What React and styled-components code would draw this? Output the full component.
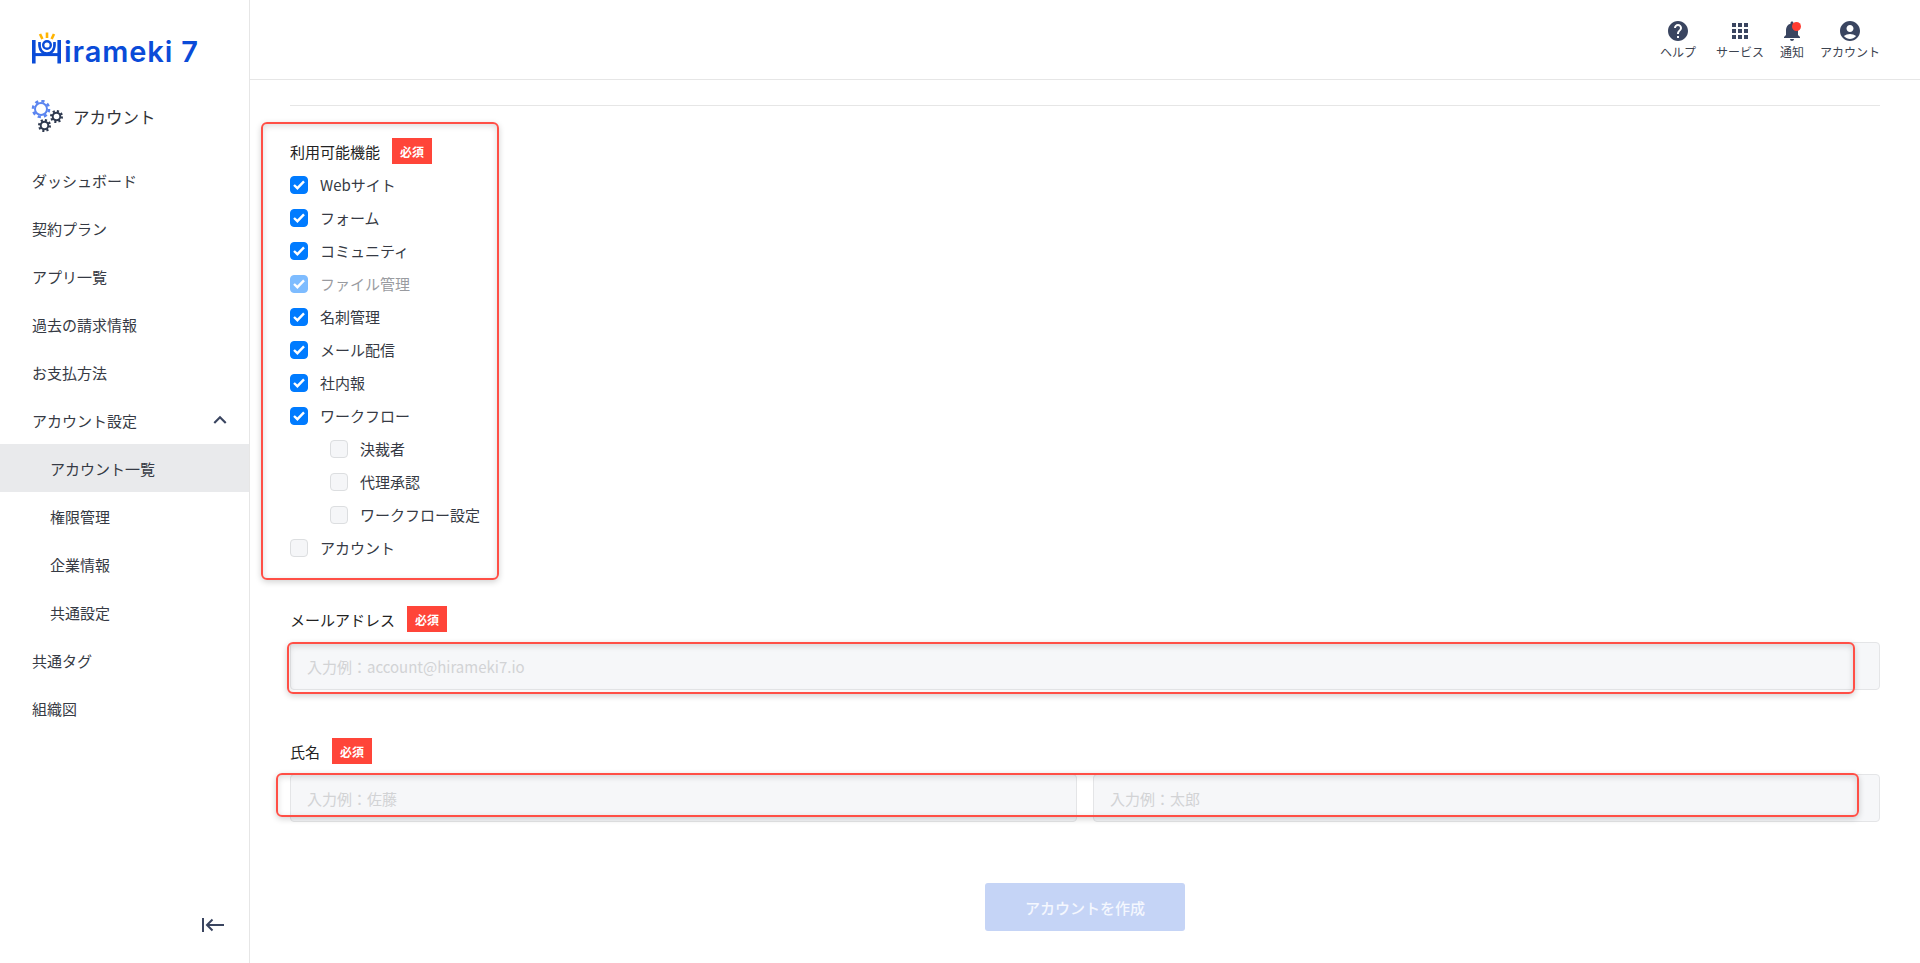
import React from "react";
import styled, { createGlobalStyle } from "styled-components";
import {
  MdHelp,
  MdApps,
  MdNotifications,
  MdAccountCircle,
  MdKeyboardArrowUp,
} from "react-icons/md";

const GlobalStyle = createGlobalStyle`
  * { box-sizing: border-box; }
  html, body { margin: 0; padding: 0; background: #fff; }
  body {
    font-family: "Noto Sans CJK JP", "Noto Sans", sans-serif;
    color: #333;
  }
`;

const menuItems = [
  { label: "ダッシュボード" },
  { label: "契約プラン" },
  { label: "アプリ一覧" },
  { label: "過去の請求情報" },
  { label: "お支払方法" },
  { label: "アカウント設定", open: true },
  { label: "アカウント一覧", sub: true, active: true },
  { label: "権限管理", sub: true },
  { label: "企業情報", sub: true },
  { label: "共通設定", sub: true },
  { label: "共通タグ" },
  { label: "組織図" },
];

const features = [
  { label: "Webサイト", checked: true },
  { label: "フォーム", checked: true },
  { label: "コミュニティ", checked: true },
  { label: "ファイル管理", checked: true, disabled: true },
  { label: "名刺管理", checked: true },
  { label: "メール配信", checked: true },
  { label: "社内報", checked: true },
  { label: "ワークフロー", checked: true },
  { label: "決裁者", sub: true },
  { label: "代理承認", sub: true },
  { label: "ワークフロー設定", sub: true },
  { label: "アカウント" },
];

function LogoMark() {
  return (
    <svg width="30" height="32" viewBox="0 0 30 32">
      <g fill="none" stroke="#ffb400" strokeWidth="2.6">
        <path d="M8 2 L10.4 7" />
        <path d="M15 0.5 V6" />
        <path d="M22 2 L19.6 7" />
      </g>
      <g fill="none" stroke="#0a4bd8">
        <path d="M1.8 8 V31.5" strokeWidth="3.6" />
        <path d="M27.2 8 V31.5" strokeWidth="3.6" />
        <path d="M1.8 22.6 H27.2" strokeWidth="3" />
        <path d="M7.5 10 C6.8 18 10.5 21.5 15 21.5 C19.5 21.5 23.2 18 22.5 10" strokeWidth="2.6" />
        <circle cx="15" cy="13" r="3.8" strokeWidth="2.4" />
      </g>
    </svg>
  );
}

function GearIcon() {
  return (
    <svg width="34" height="34" viewBox="0 0 34 34" fill="none">
      <g stroke="#5b85f0">
        <circle cx="10" cy="9" r="6" strokeWidth="2" />
        <circle cx="10" cy="9" r="8" strokeWidth="2.6" strokeDasharray="3.2 3.1" />
      </g>
      <g stroke="#2f3a4f">
        <circle cx="25.5" cy="16.5" r="3.8" strokeWidth="2" />
        <circle cx="25.5" cy="16.5" r="5.4" strokeWidth="2.2" strokeDasharray="2.1 2.1" />
        <circle cx="13.5" cy="25.5" r="3.8" strokeWidth="2" />
        <circle cx="13.5" cy="25.5" r="5.4" strokeWidth="2.2" strokeDasharray="2.1 2.1" />
      </g>
    </svg>
  );
}

function CollapseIcon() {
  return (
    <svg width="22" height="14" viewBox="0 0 22 14" fill="none" stroke="#3a4560" strokeWidth="2">
      <path d="M1 0 V14" />
      <path d="M22 7 H5" />
      <path d="M10.5 1.5 L5 7 L10.5 12.5" />
    </svg>
  );
}

function CheckMark() {
  return (
    <svg width="12" height="10" viewBox="0 0 12 10" fill="none" stroke="#fff" strokeWidth="2.4">
      <path d="M1 5 L4.4 8.2 L11 1.4" />
    </svg>
  );
}

function FeatureRow({ label, checked, disabled, sub }) {
  return (
    <CheckRow $sub={sub} $disabled={disabled}>
      <CheckBox $checked={checked}>{checked && <CheckMark />}</CheckBox>
      <CheckText>{label}</CheckText>
    </CheckRow>
  );
}

export default function App() {
  return (
    <Page>
      <GlobalStyle />
      <Sidebar>
        <Logo>
          <LogoMark />
          <LogoText>irameki 7</LogoText>
        </Logo>
        <SectionTitle>
          <GearIcon />
          <span>アカウント</span>
        </SectionTitle>
        <Menu>
          {menuItems.map((item) => (
            <MenuItem key={item.label} $sub={item.sub} $active={item.active}>
              {item.label}
              {item.open && <MdKeyboardArrowUp size={26} color="#3a4560" />}
            </MenuItem>
          ))}
        </Menu>
        <CollapseRow>
          <CollapseIcon />
        </CollapseRow>
      </Sidebar>

      <Main>
        <Header>
          <HeaderItem>
            <MdHelp size={24} />
            <HeaderLabel>ヘルプ</HeaderLabel>
          </HeaderItem>
          <HeaderItem>
            <MdApps size={24} />
            <HeaderLabel>サービス</HeaderLabel>
          </HeaderItem>
          <HeaderItem>
            <BellWrap>
              <MdNotifications size={24} />
              <BellDot />
            </BellWrap>
            <HeaderLabel>通知</HeaderLabel>
          </HeaderItem>
          <HeaderItem>
            <MdAccountCircle size={24} />
            <HeaderLabel>アカウント</HeaderLabel>
          </HeaderItem>
        </Header>

        <Content>
          <Divider />

          <FeatureField>
            <Highlight $top={-16} $left={-29} $width={238} $height={458} />
            <FieldLabel>
              利用可能機能<Required>必須</Required>
            </FieldLabel>
            <CheckList>
              {features.map((f) => (
                <FeatureRow key={f.label} {...f} />
              ))}
            </CheckList>
          </FeatureField>

          <InputField>
            <FieldLabel>
              メールアドレス<Required>必須</Required>
            </FieldLabel>
            <InputRow>
              <TextInput disabled placeholder="入力例：account@hirameki7.io" />
              <Highlight $top={0} $left={-3} $width={1568} $height={52} />
            </InputRow>
          </InputField>

          <InputField>
            <FieldLabel>
              氏名<Required>必須</Required>
            </FieldLabel>
            <InputRow>
              <TextInput disabled placeholder="入力例：佐藤" />
              <TextInput disabled placeholder="入力例：太郎" />
              <Highlight $top={-1} $left={-14} $width={1583} $height={44} />
            </InputRow>
          </InputField>

          <ButtonRow>
            <SubmitButton disabled>アカウントを作成</SubmitButton>
          </ButtonRow>
        </Content>
      </Main>
    </Page>
  );
}

const Page = styled.div`
  display: flex;
  width: 100%;
  height: 963px;
  overflow: hidden;
`;

const Sidebar = styled.aside`
  display: flex;
  flex-direction: column;
  flex: 0 0 250px;
  height: 100%;
  border-right: 1px solid #e6e6e6;
`;

const Logo = styled.div`
  display: flex;
  align-items: flex-end;
  height: 64px;
  margin-bottom: 14px;
  padding: 32px 0 0 32px;
`;

const LogoText = styled.span`
  font-family: "Inter", sans-serif;
  font-weight: 600;
  font-size: 29px;
  line-height: 30px;
  letter-spacing: 0.9px;
  color: #0a4bd8;
  margin-left: 2px;
  margin-bottom: -3px;
  white-space: nowrap;
`;

const SectionTitle = styled.div`
  display: flex;
  align-items: center;
  gap: 8px;
  height: 78px;
  padding-left: 31px;
  font-size: 16.5px;
  color: #2f3136;
`;

const Menu = styled.nav`
  display: flex;
  flex-direction: column;
`;

const MenuItem = styled.div`
  display: flex;
  align-items: center;
  justify-content: space-between;
  height: 48px;
  padding: 0 16px 0 ${(p) => (p.$sub ? "50px" : "32px")};
  font-size: 15px;
  color: #363a44;
  background: ${(p) => (p.$active ? "#e9eaec" : "transparent")};
`;

const CollapseRow = styled.div`
  display: flex;
  justify-content: flex-end;
  margin-top: auto;
  padding: 0 25px 31px 0;
`;

const Main = styled.main`
  display: flex;
  flex-direction: column;
  flex: 1;
  min-width: 0;
`;

const Header = styled.header`
  display: flex;
  justify-content: flex-end;
  gap: 16px;
  height: 80px;
  padding: 19px 40px 0 0;
  border-bottom: 1px solid #e6e6e6;
`;

const HeaderItem = styled.div`
  display: flex;
  flex-direction: column;
  align-items: center;
  color: #3a4560;

  &:first-child {
    margin-right: 4px;
  }
`;

const HeaderLabel = styled.span`
  font-size: 12px;
  line-height: 16px;
  margin-top: 1px;
  color: #3c4350;
`;

const BellWrap = styled.span`
  position: relative;
  display: block;
  height: 24px;
`;

const BellDot = styled.span`
  position: absolute;
  top: 3px;
  right: 3px;
  width: 9px;
  height: 9px;
  border-radius: 50%;
  background: #ff3b30;
`;

const Content = styled.div`
  display: flex;
  flex-direction: column;
  padding: 25px 40px 0;
`;

const Divider = styled.hr`
  width: 100%;
  margin: 0;
  border: none;
  border-top: 1px solid #e6e6e6;
`;

const FeatureField = styled.section`
  position: relative;
  margin-top: 32px;
`;

const InputField = styled.section`
  margin-top: 49px;

  & + & {
    margin-top: 48px;
  }
`;

const FieldLabel = styled.div`
  display: flex;
  align-items: center;
  gap: 12px;
  height: 26px;
  font-size: 15px;
  color: #222;
`;

const Required = styled.span`
  display: inline-flex;
  align-items: center;
  justify-content: center;
  width: 40px;
  height: 26px;
  background: #ff4539;
  color: #fff;
  font-size: 12px;
  font-weight: 700;
`;

const CheckList = styled.div`
  display: flex;
  flex-direction: column;
  gap: 15px;
  margin-top: 12px;
`;

const CheckRow = styled.label`
  display: flex;
  align-items: center;
  gap: 12px;
  height: 18px;
  padding-left: ${(p) => (p.$sub ? "40px" : "0")};
  font-size: 15px;
  color: #363a44;
  opacity: ${(p) => (p.$disabled ? 0.5 : 1)};
`;

const CheckText = styled.span`
  padding-bottom: 2px;
`;

const CheckBox = styled.span`
  display: inline-flex;
  align-items: center;
  justify-content: center;
  flex: 0 0 18px;
  width: 18px;
  height: 18px;
  border-radius: 4px;
  border: 1px solid ${(p) => (p.$checked ? "#007bff" : "#dcdee0")};
  background: ${(p) => (p.$checked ? "#007bff" : "#f5f6f8")};
`;

const InputRow = styled.div`
  position: relative;
  display: flex;
  gap: 16px;
  margin-top: 10px;
`;

const TextInput = styled.input`
  flex: 1;
  min-width: 0;
  height: 48px;
  padding: 0 16px;
  border: 1px solid #e4e5e7;
  border-radius: 4px;
  background: #f6f7f9;
  font-family: inherit;
  font-size: 15px;

  &::placeholder {
    color: #d2d3d5;
    opacity: 1;
  }
`;

const Highlight = styled.span`
  position: absolute;
  top: ${(p) => p.$top}px;
  left: ${(p) => p.$left}px;
  width: ${(p) => p.$width}px;
  height: ${(p) => p.$height}px;
  border: 2px solid #ff4f46;
  border-radius: 6px;
  box-shadow: 0 2px 6px rgba(0, 0, 0, 0.18), inset 0 2px 6px rgba(0, 0, 0, 0.14);
  pointer-events: none;
`;

const ButtonRow = styled.div`
  display: flex;
  justify-content: center;
  margin-top: 61px;
`;

const SubmitButton = styled.button`
  width: 200px;
  height: 48px;
  border: none;
  border-radius: 3px;
  background: #c5d4f6;
  color: #f4f7fe;
  font-family: inherit;
  font-size: 15px;
  font-weight: 500;
`;
